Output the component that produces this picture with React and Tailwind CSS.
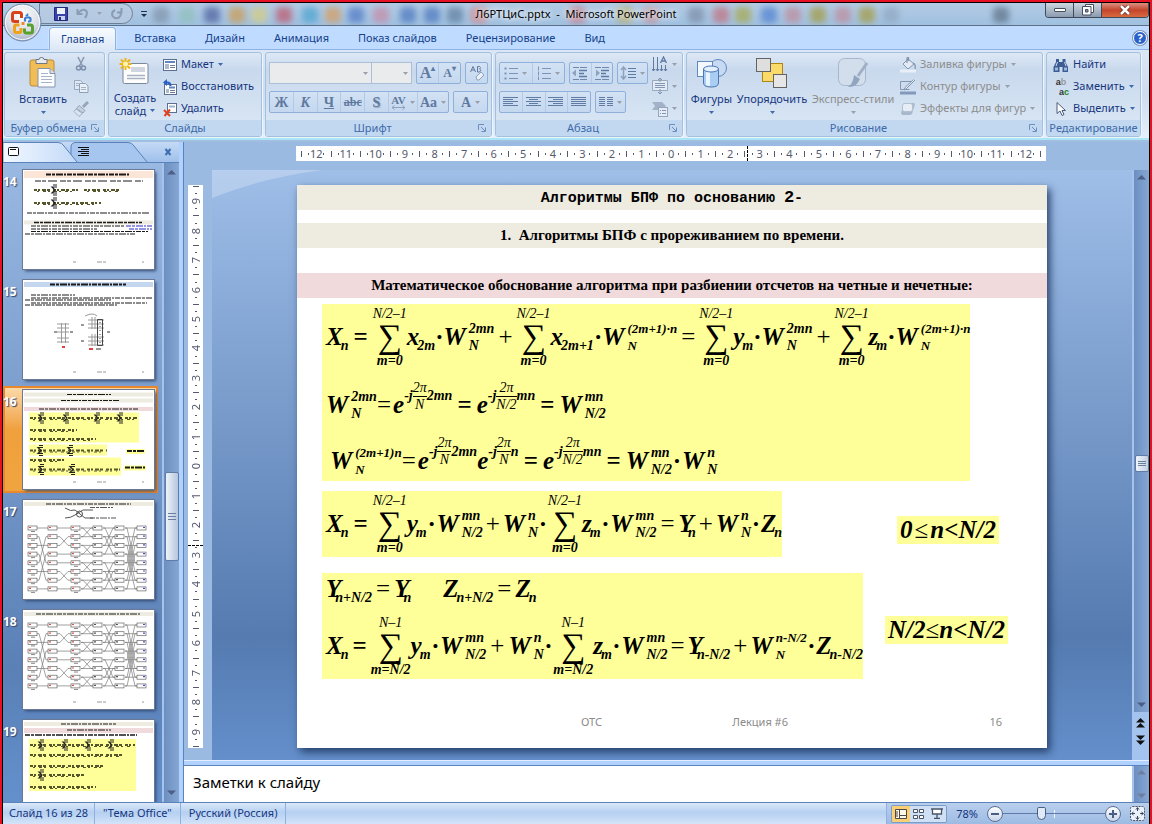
import React from "react";
import clsx from "clsx";

/* ---------- small shared pieces ---------- */

function Caret({ muted, className }) {
  return (
    <svg
      width="5"
      height="3"
      viewBox="0 0 5 3"
      className={clsx("shrink-0", muted ? "text-[#98a0ac]" : "text-[#3f6aae]", className)}
    >
      <path d="M0 0H5L2.5 3Z" fill="currentColor" />
    </svg>
  );
}

function Launcher() {
  return (
    <button aria-label="Открыть диалоговое окно" className="absolute right-1 top-1">
      <svg width="9" height="9" viewBox="0 0 9 9" fill="none" stroke="#6d8fbd">
        <path d="M0.5 6V0.5H6" />
        <path d="M3 3L7 7M7.5 3.5V7.5H3.5" />
      </svg>
    </button>
  );
}

function Group({ title, launcher, className, children }) {
  return (
    <section
      className={clsx(
        "flex h-[85px] shrink-0 flex-col overflow-hidden rounded-[3px] border border-[#a3c0de] bg-linear-to-b from-[#dde8f5] via-[#c9d9ed] via-20% to-[#dbe8f5] shadow-[1px_1px_0_#eef5fc]",
        className
      )}
    >
      <div className="flex min-h-0 flex-1">{children}</div>
      <h2 className="relative h-4 bg-[#c1d8f0] text-center text-[11px] leading-4 text-[#3e6aaa]">
        <span className={launcher ? "pr-3" : ""}>{title}</span>
        {launcher && <Launcher />}
      </h2>
    </section>
  );
}

function SmallButton({ icon, label, caret, disabled }) {
  return (
    <button
      disabled={disabled}
      className={clsx(
        "flex h-[22px] items-center gap-1 whitespace-nowrap",
        disabled ? "text-[#8d8d8d]" : "text-[#15367f]"
      )}
    >
      {icon}
      <span>{label}</span>
      {caret && <Caret muted={disabled} />}
    </button>
  );
}

function ToolSet({ children, className }) {
  return (
    <div
      className={clsx(
        "flex h-[22px] divide-x divide-[#b3cae6] rounded-[2px] border border-[#8fb0da] bg-linear-to-b from-[#d3e2f4] to-[#c4d8ef] text-[#60799f]",
        className
      )}
    >
      {children}
    </div>
  );
}

function Tool({ label, caret, children, className }) {
  return (
    <button
      aria-label={label}
      disabled
      className={clsx("flex flex-1 items-center justify-center gap-1 font-['Liberation_Serif',serif] text-[14px] font-bold", className)}
    >
      {children}
      {caret && <Caret muted />}
    </button>
  );
}

/* ---------- icons ---------- */

const Svg = ({ w = 16, h = 16, children }) => (
  <svg width={w} height={h} viewBox={`0 0 ${w} ${h}`} fill="none" className="shrink-0">
    {children}
  </svg>
);

const OfficeLogo = () => (
  <svg width="40" height="40" viewBox="0 0 40 40" fill="none">
    <defs>
      <radialGradient id="orb" cx="0.5" cy="0.3" r="0.75">
        <stop offset="0" stopColor="#ffffff" />
        <stop offset="0.6" stopColor="#d9dde6" />
        <stop offset="1" stopColor="#9aa8bf" />
      </radialGradient>
    </defs>
    <circle cx="19.500" cy="19.500" r="18.5" fill="url(#orb)" stroke="#7288a8" />
    <circle cx="19.500" cy="19.500" r="17" stroke="#f6f9fd" />
    <g strokeWidth="3" strokeLinejoin="round">
      <path d="M16 18.500H11.500Q9.500 18.500 9.500 16.500V11.500Q9.500 9.500 11.500 9.500H16.500Q18.500 9.500 18.500 11.500V15" stroke="#d8421a" />
      <path d="M22 18.500V16Q22 14.500 23.500 14.500H26Q27.500 14.500 27.500 16V17.500Q27.500 18.500 25 18.500" stroke="#3a7fd0" strokeWidth="2.200" />
      <path d="M16.500 22H12.500Q11.500 22 11.500 24V27.500Q11.500 29.500 13.500 29.500H16.500Q18 29.500 18 27.500V25" stroke="#f0a21c" />
      <path d="M21.500 25.500V28Q21.500 30 23.500 30H27.500Q29.500 30 29.500 28V24Q29.500 22 27.500 22H24" stroke="#5aa02c" />
    </g>
    <path d="M18.500 19h3v3h-3z" fill="#f08a2d" />
    <path d="M22.500 12.500h2v-2" stroke="#3a7fd0" strokeWidth="1.500" />
  </svg>
);

const PasteIcon = () => (
  <Svg w={28} h={32}>
    <rect x="1" y="3" width="24" height="26" rx="2" fill="#f0bd58" stroke="#b98a3a" />
    <path d="M7 2.500h3q0-2 2.500-2t2.500 2h3v4H7z" fill="#e6e9ee" stroke="#6f7782" />
    <path d="M9 11.500h12l5 5V30H9z" fill="#fbfdff" stroke="#8493ad" />
    <path d="M21 11.500v5h5" fill="#d5dfee" stroke="#8493ad" />
    <path d="M12 16.500h7M12 19.500h11M12 22.500h11M12 25.500h11" stroke="#a5b3cb" />
  </Svg>
);

const CutIcon = () => (
  <Svg>
    <path d="M5 1L9.500 10M11 1L6.500 10" stroke="#8b9bb3" strokeWidth="1.600" />
    <circle cx="5.500" cy="12" r="2" stroke="#7d8fab" strokeWidth="1.500" />
    <circle cx="10.500" cy="12" r="2" stroke="#7d8fab" strokeWidth="1.500" />
  </Svg>
);

const CopyIcon = () => (
  <Svg>
    <path d="M1.500 2.500h6l2 2v7h-8z" fill="#dfe8f3" stroke="#9aa9be" />
    <path d="M6.500 5.500h6l2.500 2.500v6.500H6.500z" fill="#e8eff7" stroke="#8fa0b8" />
    <path d="M8 9.500h5M8 11.500h5M3 5.500h3M3 7.500h3" stroke="#a4b2c6" />
  </Svg>
);

const BrushIcon = () => (
  <Svg>
    <path d="M15 1L10 6" stroke="#96a5ba" strokeWidth="3" />
    <path d="M6 4.500L12 9.500L10 12L3.500 7.500Z" fill="#c7d2e0" stroke="#96a5ba" />
    <path d="M3 8L9.500 12.500L6 15.500L1 10.500Z" fill="#dbe4ee" stroke="#a2b0c4" />
  </Svg>
);

const NewSlideIcon = () => (
  <Svg w={32} h={30}>
    <rect x="4" y="6.500" width="25" height="20" rx="1.500" fill="#fdfdfe" stroke="#7b879a" />
    <rect x="12" y="10" width="14" height="5" fill="#cfd6e0" />
    <path d="M8 18.500h18M8 21.500h18" stroke="#a8b2c2" strokeWidth="1.500" />
    <path d="M6.500 1v12M0.500 7h12M2 2.500l9 9M11 2.500l-9 9" stroke="#eeb417" strokeWidth="2" />
    <circle cx="6.500" cy="7" r="2.500" fill="#fff4a8" />
  </Svg>
);

const LayoutIcon = () => (
  <Svg w={14}>
    <rect x="0.500" y="2.500" width="13" height="11" fill="#fff" stroke="#5c6f8e" />
    <path d="M2 5h10" stroke="#5d86c2" strokeWidth="2" />
    <rect x="2" y="7" width="4" height="5" fill="#aeb9c9" />
    <path d="M7 8.500h5M7 10.500h5" stroke="#6c7b93" />
  </Svg>
);

const ResetIcon = () => (
  <Svg w={14}>
    <rect x="1.500" y="5.500" width="12" height="10" fill="#fff" stroke="#5c6f8e" />
    <path d="M6 8.500h6" stroke="#5d86c2" strokeWidth="2" />
    <rect x="3" y="10" width="3" height="4" fill="#aeb9c9" />
    <path d="M7 11.500h5M7 13.500h5" stroke="#6c7b93" />
    <path d="M1 3.500h3.500q3 0 3 3.500" stroke="#2760c4" strokeWidth="2" />
    <path d="M0 3.500L4 0V7Z" fill="#2760c4" />
  </Svg>
);

const DeleteIcon = () => (
  <Svg w={14}>
    <rect x="4.500" y="2.500" width="9" height="9" fill="#fff" stroke="#5c6f8e" />
    <path d="M6 5.500h6" stroke="#9db2d2" strokeWidth="2" />
    <path d="M1 9l6 6M7 8.500L1.500 15" stroke="#e2401c" strokeWidth="2" />
  </Svg>
);

const ShapesIcon = () => (
  <Svg w={30} h={30}>
    <circle cx="21" cy="9" r="8.500" fill="#c6dbf3" stroke="#6288be" />
    <rect x="0.500" y="2.500" width="15" height="15" fill="#f2f8fe" stroke="#6288be" />
    <path d="M6.500 10v14q0 4 7.500 4t7.500-4V10z" fill="#a9cdf3" stroke="#4d77b2" />
    <path d="M9 12v14q2 1 4 1V13z" fill="#e8f4fe" />
    <ellipse cx="14" cy="10" rx="7.500" ry="3" fill="#e3f0fd" stroke="#4d77b2" />
  </Svg>
);

const ArrangeIcon = () => (
  <Svg w={32} h={32}>
    <rect x="6.500" y="6.500" width="20" height="18" fill="#fadb6a" stroke="#b08416" />
    <rect x="0.500" y="1.500" width="14" height="13" fill="#dedede" stroke="#636363" />
    <rect x="17.500" y="17.500" width="13" height="13" fill="#e6e6e6" stroke="#636363" />
  </Svg>
);

const StylesIcon = () => (
  <Svg w={32} h={32}>
    <rect x="1.500" y="1.500" width="27" height="27" rx="6" fill="#d3deec" stroke="#a7b6ca" />
    <path d="M30 6L21 19" stroke="#9fafc6" strokeWidth="3" />
    <path d="M17 18L23 22Q19 31 11 30Q16 27 17 18Z" fill="#92a5c0" />
  </Svg>
);

const FillIcon = () => (
  <Svg>
    <path d="M3 7l5-5 6 5-6 5z" fill="#e3eaf3" stroke="#8495af" />
    <path d="M7 6V1.500q0-1 1.500-1V4M13 6q3 1 2 6" stroke="#8495af" strokeWidth="1.300" />
    <path d="M0 14h16" stroke="#e9eff6" strokeWidth="3" />
  </Svg>
);

const OutlineIcon = () => (
  <Svg>
    <path d="M12 2.500H0.500v8h9" stroke="#8495af" />
    <path d="M15 1L6 10l-2 1 1-2.500L13.500 0.500" fill="#e3eaf3" stroke="#8495af" />
    <path d="M0 14h16" stroke="#8299ba" strokeWidth="3" />
  </Svg>
);

const EffectsIcon = () => (
  <Svg>
    <path d="M4 2h10l1 1-3 10-2 1H2L1 12Z" fill="#a9b8cd" />
    <rect x="2.500" y="2.500" width="10" height="8" rx="2" fill="#e6edf5" stroke="#b2bfd1" />
  </Svg>
);

const FindIcon = () => (
  <Svg>
    <path d="M3 2h3v3h3.500V2h3v3l2.500 5v5H9.500v-5H6.500v5H0.500v-5L3 5z" fill="#3c5c93" />
    <path d="M2 10.500h3v3H2zM11 10.500h3v3h-3z" fill="#9db9e0" />
    <path d="M4.500 5L3 9M11.500 5L13 9" stroke="#cfdef3" />
  </Svg>
);

const ReplaceIcon = () => (
  <span aria-hidden="true" className="flex w-4 shrink-0 flex-col font-['Liberation_Sans',sans-serif] text-[9px] leading-[10px] font-bold">
    <span className="text-[#333]">
      a<span className="text-[#999]">b</span>
    </span>
    <span className="text-right text-[#333]">
      a<span className="text-[#15881e]">c</span>
    </span>
  </span>
);

const PointerIcon = () => (
  <Svg>
    <path d="M4 1.500V12.500L7 10L9 14.500L11 13.500L9 9.500H12.500Z" fill="#fff" stroke="#4a5c7c" />
  </Svg>
);

const Bars = ({ rows }) => (
  <Svg w={16} h={12}>
    {rows.map(([x, w], i) => (
      <path key={i} d={`M${x} ${i * 2 + 1.5}h${w}`} stroke="#5f7aa3" />
    ))}
  </Svg>
);

const ListIcon = ({ numbered }) => (
  <Svg w={14} h={14}>
    {[2.5, 7.5, 12.5].map((y) => (
      <g key={y} stroke="#7d93b5">
        <path d={numbered ? `M1.5 ${y - 2}v4` : `M0.5 ${y}h2`} strokeWidth={numbered ? 1 : 2} />
        <path d={`M5 ${y}h9`} />
      </g>
    ))}
  </Svg>
);

const IndentIcon = ({ right }) => (
  <Svg w={16} h={14}>
    <path d="M1 1.500h14M1 13.500h14" stroke="#7088ad" strokeDasharray="6 1 7 1" />
    <path d="M7 4.500h8M7 7.500h5M7 10.500h8" stroke="#5f7aa3" strokeWidth="1.500" />
    <path d={right ? "M6 7L2 3.500v7z" : "M0 7l4-3.500v7z"} fill="#8ea2c0" />
  </Svg>
);

const SpacingIcon = () => (
  <Svg w={16} h={16}>
    <path d="M3.500 2v12M1 5l2.500-3L6 5M1 11l2.500 3L6 11" stroke="#8ea2c0" strokeWidth="1.500" />
    <path d="M8 3.500h8M8 6.500h8M8 9.500h8M8 12.500h8" stroke="#5f7aa3" />
  </Svg>
);

const TextDirIcon = () => (
  <Svg w={16}>
    <path d="M1.500 1v14M5.500 1v14M9.500 9v6M13.500 9v6" stroke="#5f7aa3" />
    <path d="M0 13l1.500 2L3 13M4 13l1.500 2L7 13M8 13l1.500 2L11 13M12 13l1.500 2L15 13" stroke="#5f7aa3" />
    <path d="M8.500 7L11.500 1L14.500 7M9.500 5h4" stroke="#5f7aa3" strokeWidth="1.300" />
  </Svg>
);

const AlignTextIcon = () => (
  <Svg w={16}>
    <path d="M0.500 2.500h15v10H0.500z" fill="#e1eaf5" stroke="#9aa9be" />
    <path d="M3 5.500h10M3 7.500h10M3 9.500h10M8 0v4M8 11v5M6 2l2-2 2 2M6 14l2 2 2-2" stroke="#8395b2" />
  </Svg>
);

const SmartArtIcon = () => (
  <Svg w={16}>
    <path d="M0 1h10l4 4-4 4H0l3-4z" fill="#a3b2c8" />
    <rect x="6.500" y="6.500" width="9" height="9" fill="#e5ecf5" stroke="#95a5bd" />
    <path d="M8 9.500h1M10 9.500h4M8 12.500h1M10 12.500h4" stroke="#8395b2" />
  </Svg>
);

/* ---------- title bar ---------- */

// soft shapes that show through the glass title bar
const glassSpots = [
  ["left-[150px]", "bg-[#7f93a8]"],
  ["left-[176px]", "bg-[#8ec0b8]"],
  ["left-[201px]", "bg-[#4c5f9c]"],
  ["left-[226px]", "bg-[#cf9a4c]"],
  ["left-[248px]", "bg-[#d9cd7f]"],
  ["left-[273px]", "bg-[#c0566a]"],
  ["left-[299px]", "bg-[#4aa3cf]"],
  ["left-[322px]", "bg-[#d89c5c]"],
  ["left-[345px]", "bg-[#4f78c4]"],
  ["left-[370px]", "bg-[#c88aa4]"],
  ["left-[397px]", "bg-[#4a76bd]"],
  ["left-[421px]", "bg-[#4a76bd]"],
  ["left-[444px]", "bg-[#5e7d9c]"],
  ["left-[468px]", "bg-[#d47a7a]"],
  ["left-[566px]", "bg-[#c86a78]"],
  ["left-[614px]", "bg-[#b8a95a]"],
  ["left-[640px]", "bg-[#c98a8f]"],
  ["left-[685px]", "bg-[#7b8ca6]"],
  ["left-[710px]", "bg-[#c2707c]"],
  ["left-[732px]", "bg-[#a8a848]"],
  ["left-[758px]", "bg-[#4f7fd0]"],
  ["left-[782px]", "bg-[#c08a98]"],
  ["left-[807px]", "bg-[#a59a3e]"],
  ["left-[832px]", "bg-[#c08a98]"],
  ["left-[856px]", "bg-[#a59a3e]"],
  ["left-[880px]", "bg-[#90a6bf]"],
  ["left-[990px]", "bg-[#5b6f85]"],
];

function TitleBar() {
  return (
    <header className="relative grid h-[23px] shrink-0 grid-cols-[1fr_auto_1fr] items-start overflow-hidden border-b border-[#5c6f84] bg-linear-to-b from-[#b4cbe4] to-[#9fc0e0]">
      <div aria-hidden="true" className="absolute inset-0">
        {glassSpots.map(([pos, bg]) => (
          <span key={pos} className={clsx("absolute top-1 size-4 rounded-[4px] opacity-70 blur-[3px]", pos, bg)} />
        ))}
      </div>
      <div className="relative flex items-center">
        <div className="ml-9 flex h-[21px] w-[94px] items-center gap-2 rounded-r-full border border-[#6d7f97] bg-[#b9cce2]/80 pl-3.5">
          <button aria-label="Сохранить">
            <Svg w={14} h={14}>
              <path d="M0.500 0.500h13v13h-13z" fill="#3a44a8" stroke="#23297a" />
              <path d="M3 1h8v6H3z" fill="#eef3fb" />
              <path d="M4 9h7v4H4z" fill="#c8d2ee" />
              <path d="M5 10h2v3H5z" fill="#23297a" />
            </Svg>
          </button>
          <button aria-label="Отменить" disabled>
            <Svg w={13} h={13}>
              <path d="M1.500 2v5h5M2 7Q5 2 9 3Q13 5 9 11" stroke="#8b9cb5" strokeWidth="2" />
            </Svg>
          </button>
          <Caret muted />
          <button aria-label="Повторить" disabled>
            <Svg w={13} h={13}>
              <path d="M11.500 1v4.500H7M10 4Q12 8 9 10.500Q5 12.500 2.500 9Q1 5 5 3" stroke="#8b9cb5" strokeWidth="2" />
            </Svg>
          </button>
        </div>
        <button aria-label="Настройка панели быстрого доступа" className="ml-2">
          <Svg w={6} h={8}>
            <path d="M0 1.500h6" stroke="#22324d" />
            <path d="M0 4h6L3 7z" fill="#22324d" />
          </Svg>
        </button>
      </div>
      <h1 className="relative text-[11px] leading-[22px] whitespace-pre text-black [text-shadow:0_0_6px_#fff,0_0_6px_#fff]">
        Л6РТЦиС.pptx  -  Microsoft PowerPoint
      </h1>
      <div className="relative flex h-[15px] justify-self-end overflow-hidden rounded-b-[4px] border border-t-0 border-[#3c4a5c]">
        <button aria-label="Свернуть" className="flex w-7 items-center justify-center border-r border-[#3c4a5c] bg-linear-to-b from-[#cfd8e2] to-[#8b9bae]">
          <span className="h-1 w-3 rounded-[1px] border border-[#454f5e] bg-white" />
        </button>
        <button aria-label="Свернуть в окно" className="flex w-7 items-center justify-center border-r border-[#3c4a5c] bg-linear-to-b from-[#cfd8e2] to-[#8b9bae]">
          <Svg w={12} h={12}>
            <path d="M3.500 0.500h8v8h-8z" fill="#fff" stroke="#454f5e" />
            <path d="M0.500 2.500h8.500v8.500H0.500z" fill="#fff" stroke="#454f5e" />
            <path d="M3.500 5.500h2.500v2.500H3.500z" fill="#8797aa" stroke="#454f5e" />
          </Svg>
        </button>
        <button aria-label="Закрыть" className="flex w-[46px] items-center justify-center bg-linear-to-b from-[#dd8f80] via-[#c4452c] to-[#d8693f]">
          <Svg w={12} h={10}>
            <path d="M2 1l8 8M10 1L2 9" stroke="#5a2a24" strokeWidth="4" />
            <path d="M2 1l8 8M10 1L2 9" stroke="#fff" strokeWidth="2.500" />
          </Svg>
        </button>
      </div>
    </header>
  );
}

/* ---------- ribbon ---------- */

const tabs = ["Главная", "Вставка", "Дизайн", "Анимация", "Показ слайдов", "Рецензирование", "Вид"];

function Tabs() {
  return (
    <nav className="flex h-6 shrink-0 items-end gap-[7px] border-b border-[#8db2e3] bg-[#bfdbff] pl-[46px] text-[11px] text-[#15428b]">
      {tabs.map((tab, i) => (
        <button
          key={tab}
          className={clsx(
            "px-[11px] leading-[22px] whitespace-nowrap",
            i === 0
              ? "-mb-px h-[23px] rounded-t-[4px] border border-b-0 border-[#8db2e3] bg-linear-to-b from-[#f7fbff] to-[#dce8f6] shadow-[0_0_2px_#fff]"
              : "h-[22px]"
          )}
        >
          {tab}
        </button>
      ))}
      <button aria-label="Справка" className="mr-0.5 mb-1 ml-auto flex size-[14px] items-center justify-center rounded-full border border-white bg-[#2b62c9] text-[11px] font-bold text-white shadow-[0_0_0_1px_#7c96bd]">
        ?
      </button>
    </nav>
  );
}

function Ribbon() {
  return (
    <div className="flex h-[90px] shrink-0 gap-[3px] border-b-2 border-[#a9e6f8] bg-linear-to-b from-[#dbe7f5] via-[#cddcef] to-[#e3effb] pt-0.5 pl-px text-[11px] text-[#15367f]">
      <Group title="Буфер обмена" launcher className="w-[101px]">
        <button className="flex w-[68px] flex-col items-center pl-2">
          <span className="pt-1">
            <PasteIcon />
          </span>
          <span className="leading-5">Вставить</span>
          <Caret className="mt-0.5" />
        </button>
        <div className="flex flex-1 flex-col items-start justify-around">
          <button aria-label="Вырезать" disabled><CutIcon /></button>
          <button aria-label="Копировать" disabled><CopyIcon /></button>
          <button aria-label="Формат по образцу" disabled><BrushIcon /></button>
        </div>
      </Group>

      <Group title="Слайды" className="w-[154px]">
        <button className="flex w-[52px] shrink-0 flex-col items-center pt-1 text-[11px] leading-[13px]">
          <NewSlideIcon />
          <span className="pt-1">Создать</span>
          <span className="flex items-center gap-1">
            слайд <Caret />
          </span>
        </button>
        <div className="flex flex-col justify-center pl-0.5">
          <SmallButton icon={<LayoutIcon />} label="Макет" caret />
          <SmallButton icon={<ResetIcon />} label="Восстановить" />
          <SmallButton icon={<DeleteIcon />} label="Удалить" />
        </div>
      </Group>

      <Group title="Шрифт" launcher className="w-[227px]">
        <div className="flex flex-1 flex-col gap-[7px] px-[3px] pt-[9px]">
          <div className="flex">
            <div className="relative flex-1">
              <select aria-label="Шрифт" disabled className="block h-[22px] w-full appearance-none border border-[#abbfd8] bg-[#e9ebed]" />
              <Caret muted className="absolute top-2.5 right-1" />
            </div>
            <div className="relative w-10">
              <select aria-label="Размер шрифта" disabled className="block h-[22px] w-full appearance-none border border-l-0 border-[#abbfd8] bg-[#e9ebed]" />
              <Caret muted className="absolute top-2.5 right-1" />
            </div>
            <ToolSet className="ml-1 w-[45px]">
              <Tool label="Увеличить размер" className="text-[16px]!">A<sup className="-ml-1 text-[8px]">▴</sup></Tool>
              <Tool label="Уменьшить размер" className="text-[12px]!">A<sup className="-ml-1 text-[8px]">▾</sup></Tool>
            </ToolSet>
            <ToolSet className="ml-1 w-[23px]">
              <Tool label="Очистить форматирование">
                <Svg w={16} h={16}>
                  <path d="M1.500 7L4 1.500L6.500 7M2.500 5h3M8.500 7V1.500h2q2 1 0 2.500q3 1 0 3z" stroke="#60799f" />
                  <path d="M7 12l5-5 3 3-5 5H8z" fill="#e8eff7" stroke="#8ea2c0" />
                </Svg>
              </Tool>
            </ToolSet>
          </div>
          <div className="flex gap-1">
            <ToolSet className="flex-1">
              <Tool label="Полужирный">Ж</Tool>
              <Tool label="Курсив" className="italic">К</Tool>
              <Tool label="Подчеркнутый" className="underline">Ч</Tool>
              <Tool label="Зачеркнутый" className="text-[12px]! line-through">abc</Tool>
              <Tool label="Тень" className="[text-shadow:1px_1px_1px_#8ea2c0]">S</Tool>
              <Tool label="Межзнаковый интервал" caret className="px-0.5">
                <span className="flex flex-col items-center text-[11px] leading-[10px]">
                  AV
                  <Svg w={15} h={5}>
                    <path d="M1 2.500h13M3.500 0.500L1 2.500L3.500 4.500M11.500 0.500L14 2.500L11.500 4.500" stroke="#8ea2c0" />
                  </Svg>
                </span>
              </Tool>
              <Tool label="Регистр" caret className="px-0.5">Aa</Tool>
            </ToolSet>
            <ToolSet className="w-[35px]">
              <Tool label="Цвет текста" caret>A</Tool>
            </ToolSet>
          </div>
        </div>
      </Group>

      <Group title="Абзац" launcher className="w-[188px]">
        <div className="flex flex-1 flex-col gap-[7px] pt-[9px] pl-[3px]">
          <div className="flex gap-1">
            <ToolSet className="w-[66px]">
              <Tool label="Маркеры" caret><ListIcon /></Tool>
              <Tool label="Нумерация" caret><ListIcon numbered /></Tool>
            </ToolSet>
            <ToolSet className="w-[44px]">
              <Tool label="Уменьшить отступ"><IndentIcon /></Tool>
              <Tool label="Увеличить отступ"><IndentIcon right /></Tool>
            </ToolSet>
            <ToolSet className="w-[31px]">
              <Tool label="Интервал" caret><SpacingIcon /></Tool>
            </ToolSet>
          </div>
          <div className="flex gap-1">
            <ToolSet className="w-[92px]">
              <Tool label="По левому краю"><Bars rows={[[0, 15], [0, 10], [0, 15], [0, 10], [0, 15]]} /></Tool>
              <Tool label="По центру"><Bars rows={[[0, 15], [3, 9], [0, 15], [3, 9], [0, 15]]} /></Tool>
              <Tool label="По правому краю"><Bars rows={[[0, 15], [5, 10], [0, 15], [5, 10], [0, 15]]} /></Tool>
              <Tool label="По ширине"><Bars rows={[[0, 15], [0, 15], [0, 15], [0, 15], [0, 15]]} /></Tool>
            </ToolSet>
            <ToolSet className="w-[31px]">
              <Tool label="Колонки" caret>
                <Svg w={14} h={12}>
                  <path d="M0 1.500h6M8 1.500h6M0 3.500h6M8 3.500h6M0 5.500h6M8 5.500h6M0 7.500h6M8 7.500h6M0 9.500h6M8 9.500h6" stroke="#5f7aa3" />
                </Svg>
              </Tool>
            </ToolSet>
          </div>
        </div>
        <div className="flex w-[30px] shrink-0 flex-col justify-around">
          <button aria-label="Направление текста" disabled className="flex items-center gap-1"><TextDirIcon /><Caret muted /></button>
          <button aria-label="Выровнять текст" disabled className="flex items-center gap-1"><AlignTextIcon /><Caret muted /></button>
          <button aria-label="Преобразовать в SmartArt" disabled className="flex items-center gap-1"><SmartArtIcon /><Caret muted /></button>
        </div>
      </Group>

      <Group title="Рисование" launcher className="w-[357px]">
        <button className="flex w-[49px] flex-col items-center">
          <span className="pt-1.5"><ShapesIcon /></span>
          <span className="leading-5">Фигуры</span>
          <Caret className="mt-0.5" />
        </button>
        <button className="flex w-[72px] flex-col items-center">
          <span className="pt-1"><ArrangeIcon /></span>
          <span className="leading-5">Упорядочить</span>
          <Caret className="mt-0.5" />
        </button>
        <button disabled className="flex w-[90px] flex-col items-center text-[#8d8d8d]">
          <span className="pt-1"><StylesIcon /></span>
          <span className="leading-5 whitespace-nowrap">Экспресс-стили</span>
          <Caret muted className="mt-0.5" />
        </button>
        <div className="flex flex-col justify-center pl-0.5">
          <SmallButton icon={<FillIcon />} label="Заливка фигуры" caret disabled />
          <SmallButton icon={<OutlineIcon />} label="Контур фигуры" caret disabled />
          <SmallButton icon={<EffectsIcon />} label="Эффекты для фигур" caret disabled />
        </div>
      </Group>

      <Group title="Редактирование" className="w-[95px]">
        <div className="flex flex-col justify-center pl-1.5">
          <SmallButton icon={<FindIcon />} label="Найти" />
          <SmallButton icon={<ReplaceIcon />} label="Заменить" caret />
          <SmallButton icon={<PointerIcon />} label="Выделить" caret />
        </div>
      </Group>
    </div>
  );
}

/* ---------- slide thumbnails ---------- */

// a line of text too small to read, drawn as broken strokes
const Scribble = ({ x, y, w, dash = "5 1 3 1 7 1 2 1", weight = 1, color = "#1a1a1a" }) => (
  <path d={`M${x} ${y}h${w}`} stroke={color} strokeWidth={weight} strokeDasharray={dash} />
);

const MiniFormula = ({ x, y, w, sums = [] }) => (
  <g>
    <Scribble x={x} y={y} w={w} dash="3 1 2 2 4 1 3 3" weight={2} color="#55552c" />
    <Scribble x={x + 3} y={y + 1.5} w={w - 6} dash="2 4 3 2" color="#55552c" />
    {sums.map((s) => (
      <g key={s} stroke="#222" fill="none">
        <path d={`M${s + 4} ${y - 3}h-5l3 3l-3 3h5`} strokeWidth="1.200" />
        <path d={`M${s} ${y - 5}h4M${s} ${y + 5}h4`} />
      </g>
    ))}
  </g>
);

const Footer = () => (
  <g>
    <Scribble x={50} y={92} w={3} color="#999" />
    <Scribble x={74} y={92} w={10} color="#999" />
    <Scribble x={119} y={92} w={2} color="#999" />
  </g>
);

function Thumb14() {
  return (
    <>
      <path d="M1 4.500h129" stroke="#fbe5d6" strokeWidth="7" />
      <Scribble x={23} y={4.5} w={84} weight={2} />
      <Scribble x={12} y={11} w={108} dash="6 1 4 2 9 3" />
      <MiniFormula x={11} y={20} w={44} sums={[30]} />
      <MiniFormula x={61} y={20} w={37} />
      <MiniFormula x={11} y={33} w={67} sums={[30]} />
      <Scribble x={4} y={43} w={123} />
      <path d="M1 52.500h129" stroke="#eeebe0" strokeWidth="4" />
      <Scribble x={11} y={52.5} w={108} weight={1.6} />
      <Scribble x={8} y={56} w={94} />
      <Scribble x={103} y={56} w={26} color="#2b2bd0" />
      <Scribble x={8} y={59} w={66} />
      <Scribble x={106} y={59} w={23} color="#2b2bd0" />
      <Scribble x={8} y={61.5} w={117} />
      <Scribble x={2} y={64} w={110} />
      <Footer />
    </>
  );
}

function Thumb15() {
  return (
    <>
      <path d="M1 4.500h129" stroke="#c5d7ee" strokeWidth="5" />
      <Scribble x={27} y={4.5} w={76} weight={2} />
      <Scribble x={8} y={15} w={44} />
      <Scribble x={8} y={18} w={121} />
      <Scribble x={2} y={20} w={86} />
      <Scribble x={8} y={23} w={116} />
      <Scribble x={2} y={25} w={92} />
      <g stroke="#9a9a9a" fill="none">
        <path d="M38.500 43v20M42.500 43v20M34 44h12M34 48h12M34 52h12M34 58h12M34 62h12" />
        <path d="M69 37v12M72 37v12M65 40h16M65 44h16M65 48h16M69 54v12M72 54v12M65 57h16M65 61h16M65 65h16M62 36q8-4 12 0" />
        <path d="M74.500 39.500h5v26h-5z" stroke="#444" />
        <path d="M77 42v22" stroke="#444" strokeDasharray="1 3" />
      </g>
      <path d="M39 67h3M66 69h4" stroke="#e04040" strokeWidth="2" />
      <path d="M31 52h3M47 52h3M58 45h3M58 61h3M84 52h3M73 69h5" stroke="#777" strokeWidth="1.500" />
      <Footer />
    </>
  );
}

function Thumb16() {
  return (
    <>
      <path d="M1 4.500h129M1 10.500h129" stroke="#eeebe0" strokeWidth="4" />
      <path d="M1 19h129" stroke="#f1dadb" strokeWidth="4" />
      <Scribble x={44} y={4.5} w={44} />
      <Scribble x={38} y={10.5} w={58} />
      <Scribble x={16} y={19} w={99} />
      <path d="M6 22.500h110v30H6zM6 54.500h78v11H6zM6 67.500h92v18H6zM103 59h19v5h-19zM101 75.500h22v5h-22z" fill="#ffff99" />
      <MiniFormula x={7} y={28} w={108} sums={[17, 42, 73, 96]} />
      <MiniFormula x={7} y={40} w={47} />
      <MiniFormula x={7} y={49} w={66} />
      <MiniFormula x={7} y={60.5} w={77} sums={[16, 46]} />
      <MiniFormula x={7} y={70} w={34} />
      <MiniFormula x={7} y={79.5} w={90} sums={[17, 48]} />
      <Scribble x={104} y={61} w={17} weight={2} />
      <Scribble x={102} y={77.500} w={20} weight={2} />
      <Footer />
    </>
  );
}

const cols = [5, 25, 48, 70, 92, 114];
const rows8 = [0, 1, 2, 3, 4, 5, 6, 7];

// eight point butterfly network, `top` is the middle of its first row
function Butterfly({ top }) {
  const yOf = (r) => top + r * 8.7;
  const reversed = [0, 4, 2, 6, 1, 5, 3, 7];
  const half = [0, 2, 1, 3, 4, 6, 5, 7];
  const stage = (k, x1, x2) =>
    rows8.map((r) => (
      <path key={`${k}-${r}`} d={`M${x1} ${yOf(r)}h2L${x2 - 2} ${yOf(r ^ k)}h2M${x1} ${yOf(r)}H${x2}`} />
    ));
  return (
    <g fill="none" stroke="#7a7a7a" strokeWidth="0.700">
      {rows8.map((r) => (
        <path key={r} d={`M14 ${yOf(r)}h2L23 ${yOf(reversed[r])}h2M34 ${yOf(r)}h3L45 ${yOf(half[r])}h3`} />
      ))}
      {stage(1, 58, 70)}
      {stage(2, 80, 92)}
      {stage(4, 102, 114)}
      {cols.map((x, c) =>
        rows8.map((r) => (
          <g key={`${c}-${r}`}>
            <rect x={x} y={yOf(r) - 2} width="9" height="4" fill="#fff" stroke="#666" />
            <path
              d={`M${c === 5 ? x + 6 : x + 1} ${yOf(r) - 0.5}h2`}
              stroke={c < 3 ? "#e05050" : c === 5 ? "#4a4ae0" : "#555"}
              strokeWidth="1.200"
            />
            {(c === 0 || c === 2) && <path d={`M${x + 3} ${yOf(r) + 3.5}h4`} stroke="#555" />}
          </g>
        ))
      )}
    </g>
  );
}

function Thumb17() {
  return (
    <>
      <path d="M1 4h129" stroke="#eeebe0" strokeWidth="4" />
      <Scribble x={23} y={4} w={85} />
      <path d="M42 8q6 4 10 2l10 8h8M42 18q6 0 10-3l8-5h10" stroke="#555" fill="none" />
      <circle cx="56.500" cy="14" r="3" stroke="#555" fill="none" />
      <Scribble x={67} y={7.500} w={23} color="#555" />
      <Scribble x={67} y={18} w={26} color="#555" />
      <Butterfly top={28} />
    </>
  );
}

function Thumb18() {
  return (
    <>
      <path d="M1 4h129" stroke="#eeebe0" strokeWidth="4" />
      <Scribble x={13} y={4} w={105} />
      <Butterfly top={15} />
      <Footer />
    </>
  );
}

function Thumb19() {
  return (
    <>
      <path d="M1 4h129" stroke="#eeebe0" strokeWidth="4" />
      <path d="M1 10.500h129" stroke="#f1dadb" strokeWidth="5" />
      <Scribble x={38} y={4} w={55} />
      <Scribble x={44} y={10} w={44} />
      <Scribble x={2} y={15} w={112} weight={1.6} />
      <path d="M6 19h107v52H6z" fill="#ffff99" />
      <MiniFormula x={7} y={25} w={105} sums={[17, 41, 64, 87]} />
      <MiniFormula x={7} y={35} w={92} />
      <MiniFormula x={7} y={46} w={75} />
      <MiniFormula x={7} y={55} w={54} sums={[17]} />
      <MiniFormula x={7} y={67} w={66} />
    </>
  );
}

const slides = [
  [14, Thumb14],
  [15, Thumb15],
  [16, Thumb16],
  [17, Thumb17],
  [18, Thumb18],
  [19, Thumb19],
];

const Arrow = ({ down, color = "#4c5f86" }) => (
  <svg width="9" height="5" viewBox="0 0 9 5">
    <path d={down ? "M0 0.500H9L4.500 5Z" : "M0 4.500H9L4.500 0Z"} fill={color} />
  </svg>
);

function ScrollBar({ children, className }) {
  return (
    <div
      className={clsx(
        "flex shrink-0 flex-col items-center justify-between border-l-2 border-[#a5c3ec] bg-linear-to-r from-[#6c8fc0] to-[#86a7d4]",
        className
      )}
    >
      {children}
    </div>
  );
}

function SlidePane() {
  return (
    <aside className="flex w-[176px] shrink-0 flex-col bg-linear-to-b from-[#9cbbe4] via-[#5a80b6] via-80% to-[#6390cc]">
      <div className="flex h-[21px] shrink-0 items-stretch border-b border-[#5b83bb] bg-linear-to-b from-[#c5daf5] to-[#9fc0ec]">
        <svg width="145" height="20" viewBox="0 0 145 20" fill="none">
          <defs>
            <linearGradient id="tabFill" x1="0" x2="1">
              <stop offset="0" stopColor="#f2f8ff" />
              <stop offset="1" stopColor="#c3daf8" />
            </linearGradient>
          </defs>
          <path d="M68 20V5Q68 0.500 73 0.500H125Q129 0.500 131 4L144 20" fill="#a6c5ef" stroke="#5b83bb" />
          <path d="M0 20V0.500H55Q59 0.500 61 4L74 20" fill="url(#tabFill)" stroke="#5b83bb" />
          <rect x="5.500" y="5.500" width="10" height="8" rx="1" fill="#fff" stroke="#111" />
          <path d="M7 7.500h6" stroke="#111" />
          <path d="M75 5.500h11M78 7.500h8M75 9.500h11M78 11.500h8M75 13.500h11" stroke="#111" />
        </svg>
        <button aria-label="Закрыть область" className="mr-[7px] ml-auto flex items-center">
          <Svg w={8} h={8}>
            <path d="M1.500 1L6.500 7M6.500 1L1.500 7" stroke="#3b6eb0" strokeWidth="2" />
          </Svg>
        </button>
      </div>
      <div className="flex min-h-0 flex-1">
        <ol className="min-w-0 flex-1 overflow-hidden pt-[3px]">
          {slides.map(([n, Thumb]) => (
            <li key={n} className="h-[110px]">
              <button
                className={clsx(
                  "flex h-[107px] w-[155px] border-2",
                  n === 16
                    ? "border-[#e8872c] bg-linear-to-b from-[#fbd9a6] via-[#f0a03c] via-40% to-[#f0a43f]"
                    : "border-transparent"
                )}
              >
                <span className="-ml-0.5 w-5 shrink-0 pt-[5px] text-left text-[12px] leading-[18px] font-bold text-white [text-shadow:1px_1px_1px_#33486c]">
                  {n}
                </span>
                <svg
                  width="131"
                  height="99"
                  viewBox="0 0 131 99"
                  fill="none"
                  className="mt-0.5 shrink-0 bg-white shadow-[0_0_0_1px_#6b7994,2px_2px_3px_#2f476e]"
                >
                  <Thumb />
                </svg>
              </button>
            </li>
          ))}
        </ol>
        <ScrollBar className="w-[17px] py-[7px]">
          <Arrow />
          <div className="mt-17 flex h-[89px] w-[14px] shrink-0 flex-col items-center justify-center gap-0.5 rounded-[2px] border border-[#5f7ba8] bg-linear-to-r from-[#eef3fa] to-[#b6c6dc]">
            <span className="h-px w-2 bg-[#6a7f9f]" />
            <span className="h-px w-2 bg-[#6a7f9f]" />
            <span className="h-px w-2 bg-[#6a7f9f]" />
          </div>
          <Arrow down />
        </ScrollBar>
      </div>
    </aside>
  );
}

/* ---------- formulas ---------- */

const Base = ({ children, className }) => <span className={clsx("font-bold italic", className)}>{children}</span>;

const opPad = { none: "", small: "px-[3px]", normal: "px-1", large: "px-[5px]" };
const Op = ({ children, bold, pad = bold ? "large" : "normal" }) => (
  <span className={clsx(opPad[pad], bold ? "font-bold" : "font-normal")}>{children}</span>
);
const Dot = () => <span className="w-2.5 text-center font-bold">·</span>;

// index and power stacked to the right of a base
const Stack = ({ sup, sub, className }) => (
  <span className={clsx("flex flex-col leading-[17px] font-bold italic whitespace-nowrap", className)}>
    <span>{sup || "\u00a0"}</span>
    <span>{sub || "\u00a0"}</span>
  </span>
);

// the index of a Y slips under its arm
const Sub = ({ children, tuck }) => (
  <Stack sub={children} className={clsx("text-[14px]", tuck ? "-ml-1.5" : "-ml-0.5")} />
);

const WN = ({ sup, sub = "N", className = "text-[14px]" }) => (
  <>
    <Base>W</Base>
    <Stack sup={sup} sub={sub} className={clsx("pl-[3px]", className)} />
  </>
);

const Sum = ({ from, to, wide }) => (
  <span
    className={clsx(
      "flex flex-col items-center text-[14px] leading-[15px] font-bold italic whitespace-nowrap",
      wide ? "w-10" : "w-[34px]"
    )}
  >
    <span className="font-normal">{to}</span>
    <span className="text-[34px] leading-8 font-normal not-italic">∑</span>
    <span>{from}</span>
  </span>
);

const Power = ({ den, children }) => (
  <span className="flex items-center pb-[18px] text-[14px] leading-4 font-bold italic whitespace-nowrap">
    <span>-j</span>
    <span className="flex flex-col items-center">
      <span className="w-full border-b border-black text-center font-normal">2π</span>
      <span className="font-normal">{den}</span>
    </span>
    <span>{children}</span>
  </span>
);

const Line = ({ children, className }) => (
  <div className={clsx("flex items-center pl-1", className)}>{children}</div>
);

const Formula = ({ children, className }) => (
  <div className={clsx("bg-[#ffff99] font-['Liberation_Serif',serif] text-[25px] leading-7", className)}>{children}</div>
);

const Band = ({ children, className }) => (
  <h3 className={clsx("h-[25px] text-center font-bold leading-[25px] whitespace-pre", className)}>{children}</h3>
);

function Slide() {
  return (
    <article className="h-[563px] w-[750px] shrink-0 bg-white font-['Liberation_Serif',serif] text-[15px] text-black shadow-[3px_4px_8px_#26406b]">
      <Band className="bg-[#eeebe0] font-['Liberation_Mono',monospace]">
        Алгоритмы БПФ по основанию <span className="text-[17px]">2</span>-
      </Band>
      <Band className="mt-[13px] bg-[#eeebe0]">1.  Алгоритмы БПФ с прореживанием по времени.</Band>
      <Band className="mt-[25px] bg-[#f1dadb]">
        Математическое обоснование алгоритма при разбиении отсчетов на четные и нечетные:
      </Band>

      <div className="mt-1.5 flex flex-col gap-[10px] pl-[25px]">
        <Formula className="w-[648px]">
          <Line className="h-[66px]">
            <Base>X</Base><Sub>n</Sub>
            <Op bold>=</Op>
            <Sum to="N/2–1" from="m=0" />
            <Base>x</Base><Sub>2m</Sub><Dot />
            <WN sup="2mn" />
            <Op>+</Op>
            <Sum to="N/2–1" from="m=0" />
            <Base>x</Base><Sub>2m+1</Sub><Dot />
            <WN sup="(2m+1)·n" className="text-[13px]" />
            <Op>=</Op>
            <Sum to="N/2–1" from="m=0" />
            <Base>y</Base><Sub>m</Sub><Dot />
            <WN sup="2mn" />
            <Op>+</Op>
            <Sum to="N/2–1" from="m=0" />
            <Base>z</Base><Sub>m</Sub><Dot />
            <WN sup="(2m+1)·n" className="text-[13px]" />
          </Line>
          <Line className="h-[70px]">
            <WN sup="2mn" />
            <Op pad="none">=</Op>
            <Base className="pl-0.5">e</Base><Power den="N">2mn</Power>
            <Op bold>=</Op>
            <Base>e</Base><Power den="N/2">mn</Power>
            <Op bold>=</Op>
            <WN sup="mn" sub="N/2" />
          </Line>
          <Line className="h-[41px]">
            <span className="w-1" />
            <WN sup="(2m+1)n" className="text-[13px]" />
            <Op pad="none">=</Op>
            <Base className="pl-0.5">e</Base><Power den="N">2mn</Power>
            <Base>e</Base><Power den="N">n</Power>
            <Op bold>=</Op>
            <Base>e</Base><Power den="N/2">mn</Power>
            <Op bold>=</Op>
            <WN sup="mn" sub="N/2" /><Dot />
            <WN sup="n" />
          </Line>
        </Formula>

        <div className="flex items-start">
          <Formula className="w-[460px]">
            <Line className="h-[66px]">
              <Base>X</Base><Sub>n</Sub>
              <Op bold>=</Op>
              <Sum to="N/2–1" from="m=0" />
              <Base>y</Base><Sub>m</Sub><Dot />
              <WN sup="mn" sub="N/2" />
              <Op pad="small">+</Op>
              <WN sup="n" /><Dot />
              <Sum to="N/2–1" from="m=0" />
              <Base>z</Base><Sub>m</Sub><Dot />
              <WN sup="mn" sub="N/2" />
              <Op>=</Op>
              <Base>Y</Base><Sub tuck>n</Sub>
              <Op pad="small">+</Op>
              <WN sup="n" /><Dot />
              <Base>Z</Base><Sub>n</Sub>
            </Line>
          </Formula>
          <Formula className="mt-[25px] ml-[115px] flex w-[102px] justify-center font-bold italic">
            0<span className="px-0.5 font-normal not-italic">≤</span>n&lt;N/2
          </Formula>
        </div>

        <div className="mt-1.5 flex items-start">
          <Formula className="flex w-[541px] flex-col gap-[9px]">
            <Line className="h-[31px]">
              <Base>Y</Base><Sub tuck>n+N/2</Sub>
              <Op>=</Op>
              <Base>Y</Base><Sub tuck>n</Sub>
              <span className="w-8" />
              <Base>Z</Base><Sub>n+N/2</Sub>
              <Op>=</Op>
              <Base>Z</Base><Sub>n</Sub>
            </Line>
            <Line className="h-[66px]">
              <Base>X</Base><Sub>n</Sub>
              <Op bold pad="normal">=</Op>
              <Sum wide to="N–1" from="m=N/2" />
              <Base>y</Base><Sub>m</Sub><Dot />
              <WN sup="mn" sub="N/2" />
              <Op>+</Op>
              <WN sup="n" /><Dot />
              <Sum wide to="N–1" from="m=N/2" />
              <Base>z</Base><Sub>m</Sub><Dot />
              <WN sup="mn" sub="N/2" />
              <Op pad="small">=</Op>
              <Base>Y</Base><Sub tuck>n-N/2</Sub>
              <Op pad="small">+</Op>
              <WN sup="n-N/2" className="text-[13px]" /><Dot />
              <Base>Z</Base><Sub>n-N/2</Sub>
            </Line>
          </Formula>
          <Formula className="mt-[43px] ml-[22px] flex w-[123px] justify-center font-bold italic">
            N/2<span className="font-normal not-italic">≤</span>n&lt;N/2
          </Formula>
        </div>
      </div>

      <footer className="mt-[34px] grid grid-cols-[305px_1fr_1fr] pr-[45px] text-right font-['Noto_Sans',sans-serif] text-[11px] leading-[18px] text-[#8b8b8b]">
        <span>ОТС</span>
        <span className="pr-[14px]">Лекция #6</span>
        <span>16</span>
      </footer>
    </article>
  );
}

/* ---------- rulers ---------- */

const span = (n) => Array.from({ length: n * 2 + 1 }, (_, i) => Math.abs(i - n));

function HRuler() {
  return (
    <div className="relative flex h-[15px] w-[750px] items-center bg-white px-[5px] text-[11px] leading-[15px] text-[#555b6e]">
      {span(12).map((n, i) => (
        <React.Fragment key={i}>
          <span className="h-1.5 w-px bg-[#555b6e]" />
          <span className="grid min-w-0 flex-1 grid-cols-[1fr_2fr_1fr] items-center">
            <span className="h-0.5 w-px justify-self-end bg-[#555b6e]" />
            <span className="flex justify-center">{n}</span>
            <span className="h-0.5 w-px bg-[#555b6e]" />
          </span>
        </React.Fragment>
      ))}
      <span className="h-1.5 w-px bg-[#555b6e]" />
      <span className="absolute inset-y-0 left-[451px] border-l border-dashed border-black" />
    </div>
  );
}

function VRuler() {
  return (
    <div className="relative flex h-[563px] w-[15px] flex-col items-center bg-white py-px text-[11px] leading-[15px] text-[#555b6e]">
      {span(9).map((n, i) => (
        <React.Fragment key={i}>
          <span className="h-px w-1.5 bg-[#555b6e]" />
          <span className="grid min-h-0 flex-1 grid-rows-[1fr_2fr_1fr] justify-items-center">
            <span className="h-px w-0.5 self-end bg-[#555b6e]" />
            <span className="flex rotate-180 items-center justify-center [writing-mode:vertical-rl]">{n}</span>
            <span className="h-px w-0.5 bg-[#555b6e]" />
          </span>
        </React.Fragment>
      ))}
      <span className="h-px w-1.5 bg-[#555b6e]" />
      <span className="absolute inset-x-0 top-[360px] border-t border-dashed border-black" />
    </div>
  );
}

/* ---------- workspace ---------- */

function Workspace() {
  return (
    <main className="flex min-w-0 flex-1 flex-col border-l border-[#5b83bb]">
      <div className="flex min-h-0 flex-1 flex-col bg-[#9abae2]">
        <div className="flex h-7 shrink-0 pt-1 pl-28">
          <HRuler />
        </div>
        <div className="flex min-h-0 flex-1">
          <div className="w-7 shrink-0 pt-[15px] pl-1">
            <VRuler />
          </div>
          <div className="relative min-w-0 flex-1 overflow-hidden bg-linear-to-b from-[#9fbee8] via-[#557bb0] via-79% to-[#648fcb] pt-[15px] pl-[85px]">
            <svg aria-hidden="true" width="400" height="30" viewBox="0 0 400 30" className="absolute top-0 left-0">
              <path d="M0 0H110Q50 8 0 28Z" fill="#fff" opacity="0.250" />
            </svg>
            <div className="relative">
              <Slide />
            </div>
          </div>
          <div className="flex w-[17px] shrink-0 flex-col">
            <ScrollBar className="w-[17px] flex-1 py-[5px]">
              <Arrow />
              <div className="mt-11 flex h-[17px] w-[14px] flex-col items-center justify-center gap-px rounded-[2px] border border-[#5f7ba8] bg-linear-to-r from-[#eef3fa] to-[#c3d0e3]">
                <span className="h-px w-2 bg-[#6a7f9f]" />
                <span className="h-px w-2 bg-[#6a7f9f]" />
                <span className="h-px w-2 bg-[#6a7f9f]" />
              </div>
              <Arrow down />
            </ScrollBar>
            <div className="flex h-12 flex-col items-center gap-[7px] bg-[#a5c3ef] pt-1.5">
              <button aria-label="Предыдущий слайд" className="flex flex-col">
                <Arrow color="#111" />
                <Arrow color="#111" />
              </button>
              <button aria-label="Следующий слайд" className="flex flex-col">
                <Arrow down color="#111" />
                <Arrow down color="#111" />
              </button>
            </div>
          </div>
        </div>
      </div>
      <div className="h-[6px] shrink-0 border-y border-t-[#e3efff] border-b-[#5b83bb] bg-[#b1d2ff]" />
      <div className="flex h-9 shrink-0 bg-white">
        <textarea
          aria-label="Заметки"
          defaultValue="Заметки к слайду"
          className="h-full min-w-0 flex-1 resize-none overflow-hidden px-[9px] pt-1 text-[15px] leading-6 text-black outline-none"
        />
        <ScrollBar className="w-[17px] py-1">
          <Arrow color="#6d7fa0" />
          <Arrow down color="#6d7fa0" />
        </ScrollBar>
      </div>
    </main>
  );
}

/* ---------- status bar ---------- */

function StatusBar() {
  return (
    <footer className="flex h-[22px] shrink-0 items-stretch border-t border-[#5b83bb] bg-linear-to-b from-[#dbe8f9] via-[#b5d0f1] via-45% to-[#d3e3f8] text-[11px] leading-5 text-[#15367f]">
      <span className="border-r border-[#8fb0dc] px-1.5">Слайд 16 из 28</span>
      <span className="border-r border-[#8fb0dc] px-2">"Тема Office"</span>
      <span className="border-r border-[#8fb0dc] px-2">Русский (Россия)</span>
      <div className="ml-auto flex items-center border-l border-[#8fb0dc] bg-linear-to-b from-[#b9cfed] to-[#9dbbe3] px-1">
        <div className="flex h-[18px] items-stretch overflow-hidden rounded-[2px] border border-[#7c9cc9]">
          <button aria-label="Обычный" className="flex w-[18px] items-center justify-center bg-[#fbcf74]">
            <Svg w={12} h={10}>
              <path d="M0.500 0.500h11v9H0.500zM4.500 0.500v9M4.500 6.500h7" fill="#fff8e6" stroke="#4a4a4a" />
              <path d="M2 2v6" stroke="#4a4a4a" />
            </Svg>
          </button>
          <button aria-label="Сортировщик слайдов" className="flex w-[18px] items-center justify-center bg-[#cfe0f5]">
            <Svg w={12} h={10}>
              <path d="M0.500 0.500h4v3h-4zM6.500 0.500h4v3h-4zM0.500 6.500h4v3h-4zM6.500 6.500h4v3h-4z" fill="#fff" stroke="#4a5568" />
            </Svg>
          </button>
          <button aria-label="Показ слайдов" className="flex w-[18px] items-center justify-center bg-[#cfe0f5]">
            <Svg w={12} h={11}>
              <path d="M0 1h12M1.500 1v5h9V1M6 6v4M3 10.500h6" fill="#fff" stroke="#4a5568" strokeWidth="1.300" />
            </Svg>
          </button>
        </div>
        <button className="w-10 text-center">78%</button>
        <button aria-label="Уменьшить" className="flex size-4 items-center justify-center rounded-full border border-[#5d7194] bg-linear-to-b from-white to-[#c8d6ea]">
          <span className="h-0.5 w-2 bg-[#4a5f85]" />
        </button>
        <div className="relative flex w-[102px] items-center">
          <span className="absolute left-1/2 h-2 w-px bg-[#f0f6ff]" />
          <input
            type="range"
            aria-label="Масштаб"
            defaultValue="37"
            className="relative h-4 w-full appearance-none bg-[linear-gradient(#5d7ba8,#5d7ba8)] bg-[length:100%_1px] bg-center bg-no-repeat [&::-webkit-slider-thumb]:h-[13px] [&::-webkit-slider-thumb]:w-[9px] [&::-webkit-slider-thumb]:appearance-none [&::-webkit-slider-thumb]:rounded-t-[2px] [&::-webkit-slider-thumb]:rounded-b-[5px] [&::-webkit-slider-thumb]:border [&::-webkit-slider-thumb]:border-[#4a5f85] [&::-webkit-slider-thumb]:bg-[#dfe9f7]"
          />
        </div>
        <button aria-label="Увеличить" className="flex size-4 items-center justify-center rounded-full border border-[#5d7194] bg-linear-to-b from-white to-[#c8d6ea]">
          <Svg w={8} h={8}>
            <path d="M0 4h8M4 0v8" stroke="#4a5f85" strokeWidth="2" />
          </Svg>
        </button>
        <button aria-label="Вписать слайд в окно" className="ml-2 flex size-4 items-center justify-center">
          <Svg w={15} h={15}>
            <rect x="0.500" y="0.500" width="14" height="14" rx="2" fill="#eaf1fa" stroke="#4a5568" strokeDasharray="2 1" />
            <path d="M7.500 2v3M7.500 10v3M2 7.500h3M10 7.500h3M6 3.500l1.500-2 1.500 2M6 11.500l1.500 2 1.500-2M3.500 6l-2 1.500 2 1.500M11.500 6l2 1.500-2 1.500" stroke="#3a465a" />
          </Svg>
        </button>
      </div>
    </footer>
  );
}

export default function App() {
  return (
    <div className="h-screen border-x-2 border-t-2 border-[#e81123] font-['Noto_Sans',sans-serif]">
      <div className="relative flex h-full flex-col overflow-hidden border-x border-t border-black bg-[#b1d2ff]">
        <TitleBar />
        <Tabs />
        <button aria-label="Кнопка Office" className="absolute top-0 left-0">
          <OfficeLogo />
        </button>
        <Ribbon />
        <div className="flex min-h-0 flex-1 gap-1 border-t-2 border-[#a3bde0]">
          <SlidePane />
          <Workspace />
        </div>
        <StatusBar />
      </div>
    </div>
  );
}
